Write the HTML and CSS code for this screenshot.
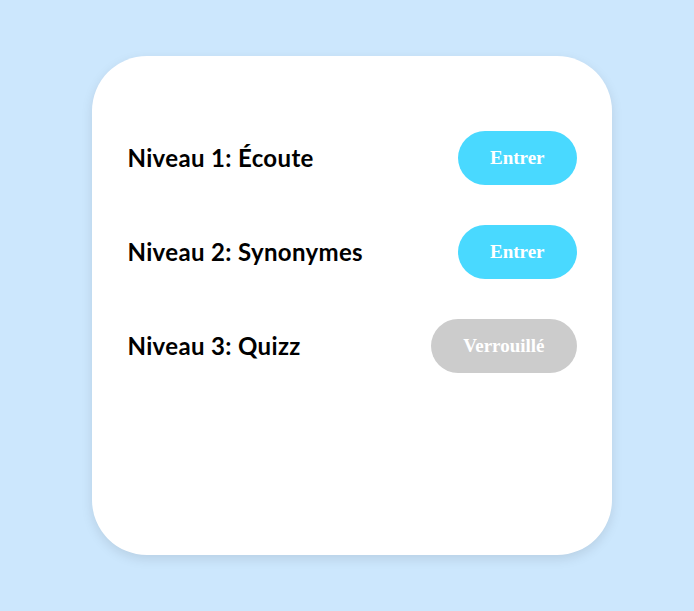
FILE: index.html
```html
<!DOCTYPE html>
<html lang="fr">
<head>
<meta charset="utf-8">
<title>Niveaux</title>
<link rel="stylesheet" href="styles.css">
</head>
<body>
<main class="card">
  <div class="level">
    <h2 class="level-title">Niveau 1: Écoute</h2>
    <button class="btn btn-open">Entrer</button>
  </div>
  <div class="level">
    <h2 class="level-title">Niveau 2: Synonymes</h2>
    <button class="btn btn-open">Entrer</button>
  </div>
  <div class="level">
    <h2 class="level-title">Niveau 3: Quizz</h2>
    <button class="btn btn-locked">Verrouillé</button>
  </div>
</main>
</body>
</html>
```
FILE: styles.css
```css
html, body {
  margin: 0;
  padding: 0;
}
body {
  background: #cce7fd;
  min-height: 611px;
  display: flex;
  justify-content: center;
  align-items: flex-start;
  padding: 56px 0 0 9px;
  box-sizing: border-box;
}
.card {
  width: 520px;
  height: 499px;
  box-sizing: border-box;
  background: #ffffff;
  border-radius: 55px;
  box-shadow: 0 4px 12px rgba(0, 0, 0, 0.1);
  padding: 75px 35px 0 36px;
  display: flex;
  flex-direction: column;
  gap: 40px;
}
.level {
  display: flex;
  align-items: center;
  justify-content: space-between;
  height: 54px;
}
.level-title {
  margin: 0 0 1px;
  font-family: "Lato", "Noto Sans", sans-serif;
  font-weight: 700;
  font-size: 24px;
  letter-spacing: 0.35px;
  color: #000;
}
.btn {
  border: none;
  border-radius: 27px;
  height: 54px;
  padding: 0 32px;
  font-family: "Liberation Serif", serif;
  font-weight: 700;
  font-size: 19px;
  color: #ffffff;
}
.btn-open {
  background: #49d9ff;
}
.btn-locked {
  background: #cccccc;
}
```
